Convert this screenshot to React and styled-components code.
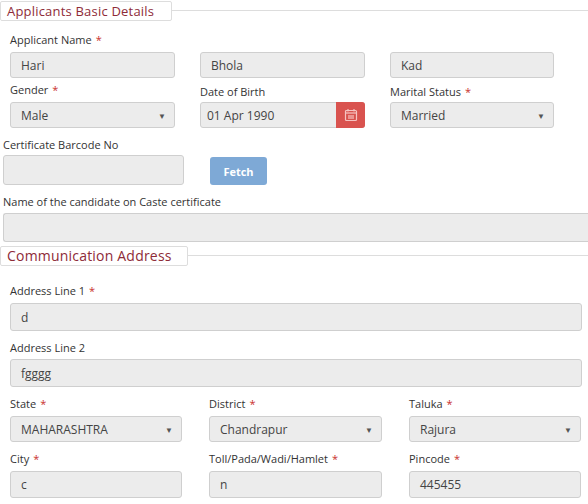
import React from "react";
import styled, { createGlobalStyle } from "styled-components";

const G = createGlobalStyle`
  body { margin:0; background:#fff; font-family: "Open Sans", "Liberation Sans", sans-serif; color:#333; }
`;
const Page = styled.div`width:588px;height:504px;overflow:hidden;position:relative;`;
const Legend = styled.div`display:flex;align-items:center;height:21px;margin-top:${p=>p.$mt||0}px;`;
const Tab = styled.div`
  height:20px;box-sizing:border-box;padding:0 6px;border:1px solid #ddd;border-radius:2px;
  color:#8e2b38;font-size:${p=>p.$fs||13}px;display:flex;align-items:center;letter-spacing:0.2px;
  width:${p=>p.$w}px;background:#fff;
`;
const Line = styled.div`flex:1;height:1px;background:#ddd;`;
const Grid = styled.div`
  display:grid;grid-template-columns:${p=>p.$cols};column-gap:${p=>p.$gap}px;
  padding-left:${p=>p.$pl}px;margin-top:${p=>p.$mt||0}px;align-items:end;
`;
const Field = styled.div`display:flex;flex-direction:column;`;
const Label = styled.div`font-size:11px;color:#333;height:13px;line-height:13px;margin-bottom:${p=>p.$mb||6}px;white-space:nowrap;`;
const Star = styled.span`color:#c9302c;margin-left:4px;`;
const Input = styled.div`
  height:${p=>p.$h||26}px;box-sizing:border-box;background:#ececec;border:1px solid #cfcfcf;border-radius:3px;
  display:flex;align-items:center;padding-left:${p=>p.$pl||10}px;font-size:12px;color:#444;
  width:${p=>p.$w?p.$w+"px":"auto"};position:relative;
`;
const Caret = styled.span`position:absolute;right:8px;font-size:8px;color:#555;`;
const Cal = styled.div`
  position:absolute;right:-1px;top:-1px;bottom:-1px;width:29px;background:#d9534f;border-radius:0 3px 3px 0;
  display:flex;align-items:center;justify-content:center;
`;
const Btn = styled.div`
  width:57px;height:28px;background:#7ea9d6;border-radius:3px;color:#fff;font-weight:bold;font-size:11px;
  display:flex;align-items:center;justify-content:center;
`;
const Row = styled.div`display:flex;align-items:flex-end;gap:${p=>p.$gap}px;padding-left:3px;margin-top:${p=>p.$mt}px;`;
const Block = styled.div`padding-left:${p=>p.$pl}px;margin-top:${p=>p.$mt}px;width:${p=>p.$w?p.$w+"px":"auto"};`;

const Sel = ({ v }) => (<Input>{v}<Caret>▼</Caret></Input>);

export default function App() {
  return (
    <Page>
      <G />
      <Legend><Tab $w={172}>Applicants Basic Details</Tab><Line /></Legend>
      <Grid $cols="165px 165px 164px" $gap={25} $pl={10} $mt={12}>
        <Field><Label>Applicant Name<Star>*</Star></Label><Input>Hari</Input></Field>
        <Field><Input>Bhola</Input></Field>
        <Field><Input>Kad</Input></Field>
      </Grid>
      <Grid $cols="165px 165px 164px" $gap={25} $pl={10} $mt={5}>
        <Field><Label>Gender<Star>*</Star></Label><Sel v="Male" /></Field>
        <Field><Label $mb={4}>Date of Birth</Label>
          <Input $pl={6}>01 Apr 1990
            <Cal>
              <svg width="14" height="14" viewBox="0 0 14 14" fill="none" stroke="#f6c4c2" strokeWidth="1.2">
                <rect x="1.5" y="2.5" width="11" height="10" rx="1"/>
                <line x1="1.5" y1="5" x2="12.5" y2="5"/>
                <line x1="4" y1="1" x2="4" y2="3.5"/><line x1="10" y1="1" x2="10" y2="3.5"/>
                <line x1="5" y1="7" x2="5" y2="11"/><line x1="7" y1="7" x2="7" y2="11"/><line x1="9" y1="7" x2="9" y2="11"/>
              </svg>
            </Cal>
          </Input></Field>
        <Field><Label $mb={4}>Marital Status<Star>*</Star></Label><Sel v="Married" /></Field>
      </Grid>
      <Block $pl={3} $mt={10}><Label $mb={0}>Certificate Barcode No</Label></Block>
      <Row $gap={26} $mt={-2}>
        <Input $w={181} $h={30} />
        <Btn>Fetch</Btn>
      </Row>
      <Block $pl={3} $mt={10}><Label $mb={5}>Name of the candidate on Caste certificate</Label>
        <Input $h={29} style={{borderRightWidth:0,borderRadius:"3px 0 0 3px"}} />
      </Block>
      <Legend $mt={3}><Tab $w={188} $fs={14}>Communication Address</Tab><Line /></Legend>
      <Block $pl={10} $mt={18} $w={572}><Label $mb={6}>Address Line 1<Star>*</Star></Label><Input $h={28}>d</Input></Block>
      <Block $pl={10} $mt={10} $w={572}><Label $mb={5}>Address Line 2</Label><Input $h={28}>fgggg</Input></Block>
      <Grid $cols="172px 173px 172px" $gap={27} $pl={10} $mt={10}>
        <Field><Label>State<Star>*</Star></Label><Sel v="MAHARASHTRA" /></Field>
        <Field><Label>District<Star>*</Star></Label><Sel v="Chandrapur" /></Field>
        <Field><Label>Taluka<Star>*</Star></Label><Sel v="Rajura" /></Field>
      </Grid>
      <Grid $cols="172px 173px 172px" $gap={27} $pl={10} $mt={10}>
        <Field><Label>City<Star>*</Star></Label><Input $h={27}>c</Input></Field>
        <Field><Label>Toll/Pada/Wadi/Hamlet<Star>*</Star></Label><Input $h={27}>n</Input></Field>
        <Field><Label>Pincode<Star>*</Star></Label><Input $h={27}>445455</Input></Field>
      </Grid>
    </Page>
  );
}
